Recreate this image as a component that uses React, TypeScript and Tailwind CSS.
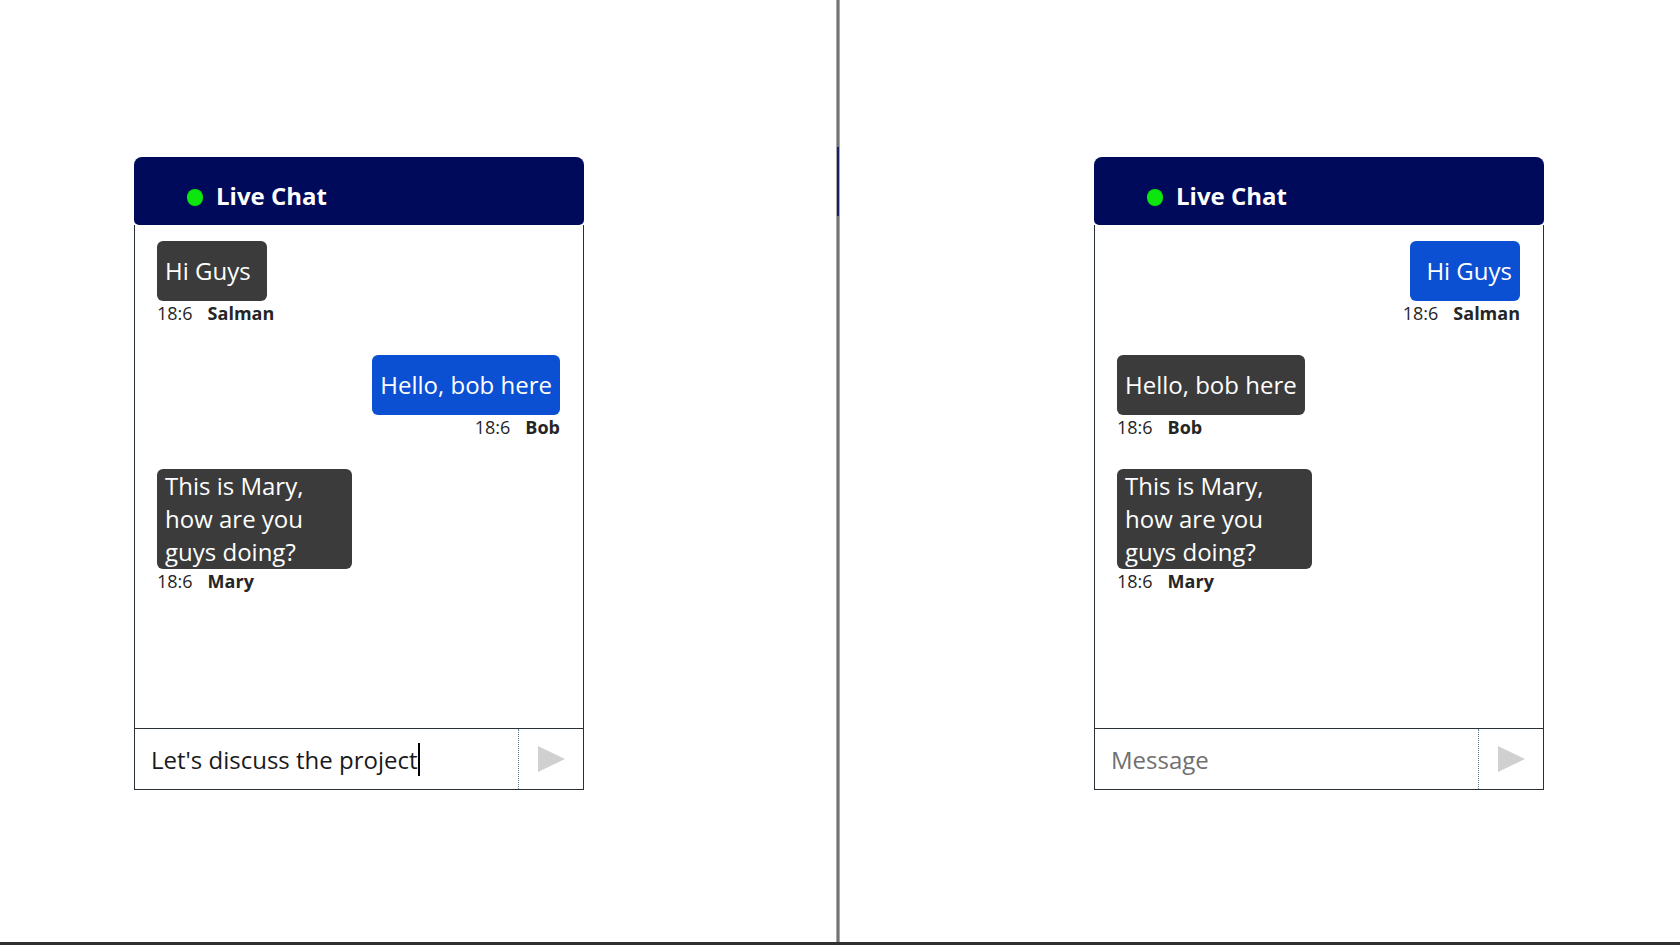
import React from 'react';

interface Message {
  id: number;
  text: string;
  time: string;
  author: string;
  mine: boolean;
}

interface ChatPanelProps {
  messages: Message[];
  draft?: string;
}

const font = { fontFamily: '"Open Sans", "Noto Sans", sans-serif' };

function SendIcon() {
  return (
    <svg width="27" height="26" viewBox="0 0 27 26">
      <polygon points="0,0 27,13 0,26" fill="#d0d0d0" />
    </svg>
  );
}

function ChatPanel({ messages, draft }: ChatPanelProps) {
  return (
    <div className="w-[450px]">
      {/* Header */}
      <div className="h-[68px] bg-[#000a5b] rounded-t-[8px] rounded-b-[5px] flex items-center pl-[53px] pt-[10px] gap-[13px]">
        <span className="w-[16px] h-[17px] rounded-full bg-[#0de60d] mt-[3px]" />
        <span className="text-white font-bold text-[24px] leading-[32px]">Live Chat</span>
      </div>

      <div className="border-x border-b border-[#283036]">
        {/* Messages */}
        <div className="h-[503px] flex flex-col gap-[30px] pt-[16px] pl-[22px] pr-[23px]">
          {messages.map((m) => (
            <div key={m.id} className={`flex flex-col ${m.mine ? 'items-end' : 'items-start'}`}>
              <div
                className={`min-h-[60px] min-w-[110px] max-w-[195px] px-2 pb-[1px] flex items-center rounded-[6px] text-white text-[24px] leading-[33px] ${
                  m.mine ? 'bg-[#0b50d3] justify-end text-right' : 'bg-[#3b3b3b] text-left'
                }`}
              >
                <span>{m.text}</span>
              </div>
              <div className="flex gap-[15px] text-[18px] leading-[23px] text-[#252525] pt-[1px]">
                <span>{m.time}</span>
                <span className="font-bold">{m.author}</span>
              </div>
            </div>
          ))}
        </div>

        {/* Input row */}
        <div className="h-[61px] border-t border-[#283036] flex">
          <div className="flex-1 flex items-center pl-[16px] text-[24px] leading-[33px]">
            {draft ? (
              <span className="flex items-center text-[#1a1a1a]">
                {draft}
                <span className="w-[2px] h-[33px] bg-black" />
              </span>
            ) : (
              <span className="text-[#707070]">Message</span>
            )}
          </div>
          <div className="w-[65px] border-l border-dotted border-[#5b7a92] flex items-center justify-center">
            <SendIcon />
          </div>
        </div>
      </div>
    </div>
  );
}

const bobView: Message[] = [
  { id: 1, text: 'Hi Guys', time: '18:6', author: 'Salman', mine: false },
  { id: 2, text: 'Hello, bob here', time: '18:6', author: 'Bob', mine: true },
  { id: 3, text: 'This is Mary, how are you guys doing?', time: '18:6', author: 'Mary', mine: false },
];

const salmanView: Message[] = [
  { id: 1, text: 'Hi Guys', time: '18:6', author: 'Salman', mine: true },
  { id: 2, text: 'Hello, bob here', time: '18:6', author: 'Bob', mine: false },
  { id: 3, text: 'This is Mary, how are you guys doing?', time: '18:6', author: 'Mary', mine: false },
];

export default function App() {
  return (
    <div className="w-[1680px] h-[945px] flex flex-col bg-white overflow-hidden" style={font}>
      <div className="flex-1 flex min-h-0">
        <div className="w-[836px] pt-[157px] pl-[134px]">
          <ChatPanel messages={bobView} draft="Let's discuss the project" />
        </div>

        {/* Split divider */}
        <div className="w-[4px] flex flex-col border-x border-[#a8a8a8]">
          <div className="h-[147px] bg-[#747474]" />
          <div className="h-[69px] bg-[#1a2163]" />
          <div className="flex-1 bg-[#747474]" />
        </div>

        <div className="flex-1 pt-[157px] pl-[254px]">
          <ChatPanel messages={salmanView} />
        </div>
      </div>
      <div className="h-[3px] bg-[#303030]" />
    </div>
  );
}
